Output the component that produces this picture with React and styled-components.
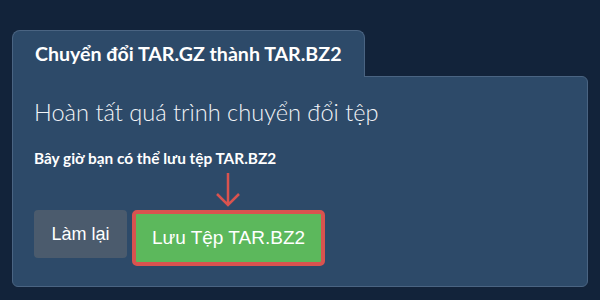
import React from 'react';
import styled, { createGlobalStyle } from 'styled-components';

const GlobalStyle = createGlobalStyle`
  html, body {
    margin: 0;
    padding: 0;
    background: #12233a;
    font-family: Lato, "Open Sans", sans-serif;
  }
`;

const Page = styled.div`
  width: 600px;
  height: 300px;
  box-sizing: border-box;
  padding: 30px 12px 0 12px;
`;

const Tab = styled.div`
  position: relative;
  z-index: 1;
  display: inline-block;
  box-sizing: border-box;
  height: 47px;
  margin-bottom: -1px;
  padding: 12px 22px 0 22px;
  background: #2d4a69;
  border: 1px solid #4a6482;
  border-bottom: none;
  border-radius: 8px 8px 0 0;
  color: #ffffff;
  font-size: 19.6px;
  font-weight: 700;
  line-height: 22px;
`;

const Panel = styled.div`
  box-sizing: border-box;
  height: 211px;
  padding: 21px 21px 0 21px;
  background: #2d4a69;
  border: 1px solid #4a6482;
  border-radius: 0 6px 6px 6px;
  color: #ffffff;
`;

const Heading = styled.div`
  font-size: 23.6px;
  font-weight: 300;
  line-height: 28px;
  color: #f2f4f7;
`;

const Note = styled.div`
  margin-top: 23px;
  font-size: 15.4px;
  font-weight: 700;
  line-height: 18px;
`;

const Actions = styled.div`
  display: flex;
  align-items: flex-start;
  gap: 5px;
  margin-top: 43px;
`;

const Button = styled.button`
  box-sizing: border-box;
  border: none;
  border-radius: 4px;
  padding: 0;
  font-family: "Liberation Sans", Arial, sans-serif;
  color: #ffffff;
  cursor: pointer;
`;

const RedoButton = styled(Button)`
  width: 93px;
  height: 48px;
  background: #4b5b6d;
  font-size: 18px;
`;

const SaveWrap = styled.div`
  position: relative;
`;

const SaveButton = styled(Button)`
  width: 193px;
  height: 56px;
  background: #5cb85c;
  border: 4px solid #d9534f;
  border-radius: 5px;
  font-size: 19px;
`;

const Pointer = styled.svg`
  position: absolute;
  left: 84px;
  top: -38px;
`;

export default function App() {
  return (
    <>
      <GlobalStyle />
      <Page>
        <Tab>Chuyển đổi TAR.GZ thành TAR.BZ2</Tab>
        <Panel>
          <Heading>Hoàn tất quá trình chuyển đổi tệp</Heading>
          <Note>Bây giờ bạn có thể lưu tệp TAR.BZ2</Note>
          <Actions>
            <RedoButton>Làm lại</RedoButton>
            <SaveWrap>
              <Pointer width="24" height="36" viewBox="0 0 24 36">
                <path d="M12 1 V33 M1 22 L12 33 L23 22" fill="none" stroke="#d9534f" strokeWidth="2.5" />
              </Pointer>
              <SaveButton>Lưu Tệp TAR.BZ2</SaveButton>
            </SaveWrap>
          </Actions>
        </Panel>
      </Page>
    </>
  );
}
